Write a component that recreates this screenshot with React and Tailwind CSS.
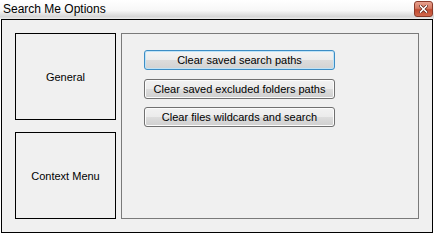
import React from 'react';

const font = { fontFamily: '"Liberation Sans", Arial, sans-serif' };

function WinButton({ children, focused }) {
  return (
    <button
      className={`w-[191px] h-[20px] rounded-[3px] border text-[11px] leading-none text-black flex items-center justify-center ${
        focused
          ? 'border-[#3c8dc5] shadow-[inset_0_0_0_1px_#bfe3f7] bg-[linear-gradient(#f4f4f4_0%,#ececec_50%,#dcdcdc_51%,#d2d2d2_100%)]'
          : 'border-[#707070] shadow-[inset_0_0_0_1px_#fcfcfc] bg-[linear-gradient(#f2f2f2_0%,#ebebeb_50%,#dddddd_51%,#cfcfcf_100%)]'
      }`}
      style={font}
    >
      {children}
    </button>
  );
}

function SideTab({ label }) {
  return (
    <div className="h-[87px] border border-black flex items-center justify-center pt-[2px] text-[11px] text-black">
      {label}
    </div>
  );
}

export default function App() {
  return (
    <div className="w-[434px] h-[234px] bg-white flex flex-col" style={font}>
      {/* Title bar */}
      <div className="h-[19px] flex items-start justify-between bg-[linear-gradient(#ffffff_0%,#f7f7f7_55%,#d6d6d6_88%,#ececec_100%)]">
        <span className="pl-[3px] pt-[1px] text-[12px] leading-[16px] text-black">Search Me Options</span>
        <div className="mt-[1px] mr-[1px] w-[19px] h-[16px] rounded-[3px] border border-[#8a3a2a] bg-[linear-gradient(#e8a18f_0%,#d47a63_45%,#c04a30_55%,#d0684c_100%)] flex items-center justify-center">
          <svg width="9" height="8" viewBox="0 0 9 8">
            <path d="M1.5 1 L7.5 7 M7.5 1 L1.5 7" stroke="#5a2015" strokeWidth="3" strokeLinecap="square" />
            <path d="M1.5 1 L7.5 7 M7.5 1 L1.5 7" stroke="#ffffff" strokeWidth="1.6" strokeLinecap="square" />
          </svg>
        </div>
      </div>

      {/* Window body */}
      <div className="ml-[1px] w-[432px] h-[214px] border border-black bg-[#f0f0f0] flex pt-[13px] pl-[13px] gap-[5px]">
        <div className="w-[101px] flex flex-col gap-[12px]">
          <SideTab label="General" />
          <SideTab label="Context Menu" />
        </div>

        <div className="w-[298px] h-[186px] border border-[#7a7a7a] flex flex-col items-start pl-[22px] pt-[16px] gap-[8px]">
          <WinButton focused>Clear saved search paths</WinButton>
          <div className="mt-[1px]">
            <WinButton>Clear saved excluded folders paths</WinButton>
          </div>
          <WinButton>Clear files wildcards and search</WinButton>
        </div>
      </div>
    </div>
  );
}
